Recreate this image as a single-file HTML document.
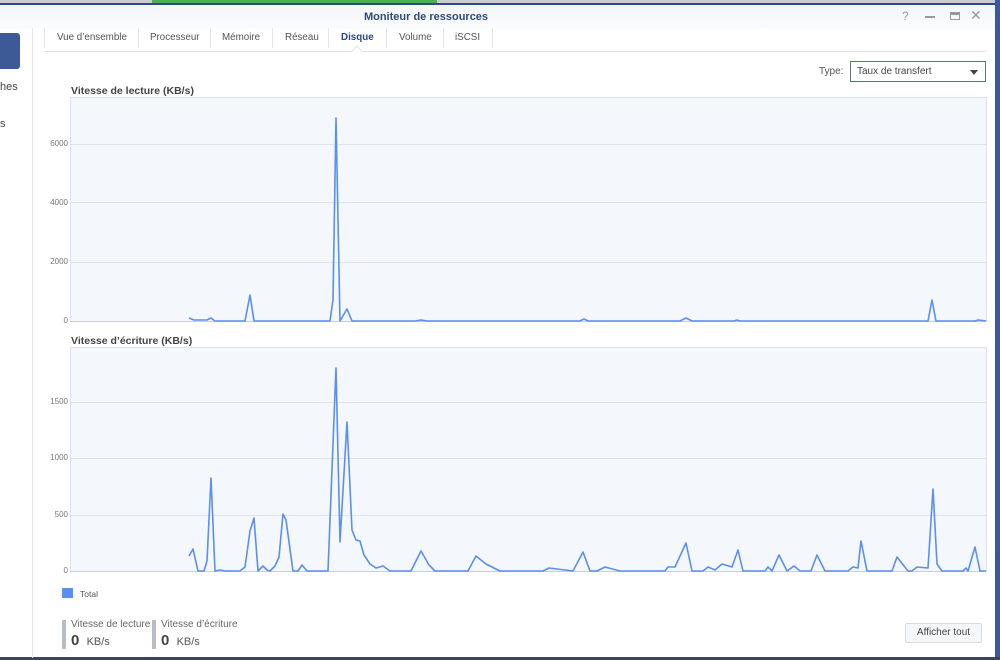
<!DOCTYPE html>
<html><head><meta charset="utf-8"><style>
*{margin:0;padding:0;box-sizing:border-box}
body{width:1000px;height:660px;overflow:hidden;position:relative;background:#fff;font-family:"Liberation Sans",sans-serif;font-size:11px;color:#555}
.a{position:absolute}
.tab{position:absolute;top:32px;font-size:9.8px;color:#555}
.sep{position:absolute;top:28px;width:1px;height:20px;background:#e3e6ea}
.yl{position:absolute;font-size:8px;color:#777;text-align:right;width:30px}
</style></head><body>
<div class="a" style="left:0;top:0;width:1000px;height:5px;background:#c9ccd1"></div>
<div class="a" style="left:0;top:3px;width:1000px;height:2px;background:#2e4a86"></div>
<div class="a" style="left:152px;top:0;width:285px;height:3px;background:#4caf50"></div>
<div class="a" style="left:995px;top:0;width:5px;height:660px;background:#3a57a0"></div>
<div class="a" style="left:0;top:657px;width:1000px;height:3px;background:#3a4658"></div>
<div class="a" style="left:0;top:5px;width:995px;height:24px;background:linear-gradient(#f3f5f8,#fbfcfd)"></div>
<div class="a" style="left:0;top:11px;width:852px;text-align:center;font-weight:bold;font-size:11px;color:#2d4a7a">Moniteur de ressources</div>
<div class="a" style="left:902px;top:9px;font-size:12px;color:#999">?</div>
<div class="a" style="left:925px;top:16px;width:10px;height:1.5px;background:#999"></div>
<div class="a" style="left:950px;top:12px;width:10px;height:8px;border:1.5px solid #999;border-top-width:3px"></div>
<div class="a" style="left:970px;top:7px;font-size:14px;color:#999">✕</div>
<div class="a" style="left:0;top:33px;width:20px;height:36px;background:#3d5a96;border-radius:0 3px 3px 0"></div>
<div class="a" style="left:0;top:81px;font-size:11px;color:#444">hes</div>
<div class="a" style="left:0;top:118px;font-size:11px;color:#444">s</div>
<div class="a" style="left:32px;top:28px;width:1px;height:630px;background:#e4e6ea"></div>
<div class="sep" style="left:44px"></div>
<div class="tab" style="left:57px">Vue d’ensemble</div><div class="sep" style="left:138px"></div>
<div class="tab" style="left:150px">Processeur</div><div class="sep" style="left:210px"></div>
<div class="tab" style="left:222px">Mémoire</div><div class="sep" style="left:272px"></div>
<div class="tab" style="left:285px">Réseau</div><div class="sep" style="left:328px"></div>
<div class="tab" style="left:341px;font-weight:bold;color:#2d4a7a">Disque</div><div class="sep" style="left:386px"></div>
<div class="tab" style="left:399px">Volume</div><div class="sep" style="left:443px"></div>
<div class="tab" style="left:455px">iSCSI</div><div class="sep" style="left:492px"></div>
<div class="a" style="left:44px;top:51px;width:942px;height:1px;background:#dfe2e6"></div>
<div class="a" style="left:353px;top:47px;width:8px;height:8px;background:#fff;border-left:1px solid #dfe2e6;border-top:1px solid #dfe2e6;transform:rotate(45deg)"></div>
<div class="a" style="left:819px;top:66px;font-size:10px;color:#555">Type:</div>
<div class="a" style="left:850px;top:61px;width:136px;height:21px;border:1px solid #5a6f96;"></div>
<div class="a" style="left:857px;top:66px;font-size:10px;color:#444">Taux de transfert</div>
<div class="a" style="left:970px;top:70px;width:0;height:0;border-left:4.5px solid transparent;border-right:4.5px solid transparent;border-top:5px solid #444"></div>
<div class="a" style="left:71px;top:85px;font-weight:bold;font-size:10.5px;color:#444">Vitesse de lecture (KB/s)</div>
<div class="a" style="left:71px;top:335px;font-weight:bold;font-size:10.5px;color:#444">Vitesse d’écriture (KB/s)</div>
<div class="yl" style="left:38px;top:139px">6000</div>
<div class="yl" style="left:38px;top:198px">4000</div>
<div class="yl" style="left:38px;top:257px">2000</div>
<div class="yl" style="left:38px;top:316px">0</div>
<div class="yl" style="left:38px;top:397px">1500</div>
<div class="yl" style="left:38px;top:453px">1000</div>
<div class="yl" style="left:38px;top:510px">500</div>
<div class="yl" style="left:38px;top:566px">0</div>
<svg class="a" style="left:0;top:0" width="1000" height="660">
<rect x="70.5" y="97.5" width="916" height="224" fill="#f4f7fc" stroke="#dde2ea"/>
<rect x="70.5" y="347.5" width="916" height="224" fill="#f4f7fc" stroke="#dde2ea"/>
<g stroke="#dfe3e9" stroke-width="1">
<line x1="71" x2="986" y1="144.5" y2="144.5"/><line x1="71" x2="986" y1="202.5" y2="202.5"/><line x1="71" x2="986" y1="262.5" y2="262.5"/>
<line x1="71" x2="986" y1="402.5" y2="402.5"/><line x1="71" x2="986" y1="458.5" y2="458.5"/><line x1="71" x2="986" y1="515.5" y2="515.5"/>
</g>
<line x1="70" x2="986" y1="321.5" y2="321.5" stroke="#c9ced8"/>
<line x1="70" x2="986" y1="571.5" y2="571.5" stroke="#c9ced8"/>
<g fill="none" stroke="#5b8ff0" stroke-width="1.6" stroke-linejoin="round">
<polyline points="189,318 194,320 207,320 211,318 215,321 245,321 250,295 254,321 330,321 333,300 336,118 340,321 347,309 352,321 415,321 421,320 427,321 580,321 584,319 588,321 680,321 686,318 692,321 734,321 737,320 740,321 928,321 932,300 936,321 975,321 978,320 986,321"/>
<polyline points="189,556 193,549 198,571 204,571 207,561 211,478 215,571 220,570 225,571 240,571 245,567 250,531 254,518 258,571 263,566 267,570 270,571 275,566 279,557 283,514 286,520 293,571 298,571 302,565 307,571 328,571 336,368 340,542 347,422 352,530 356,540 360,541 364,555 370,564 376,568 383,566 390,571 411,571 421,551 429,565 435,571 468,571 476,556 486,564 494,568 500,571 543,571 549,568 573,571 583,552 590,571 597,571 605,567 620,571 665,571 668,567 675,567 686,543 692,571 703,571 708,567 715,570 722,564 732,567 738,550 743,571 765,571 768,567 772,571 779,555 787,571 794,566 800,571 811,571 817,555 825,571 848,571 853,567 858,568 861,541 867,571 892,571 897,557 908,571 912,571 917,567 928,568 933,489 937,564 942,571 963,571 966,568 968,571 975,547 980,571 986,571"/>
</g>
</svg>
<div class="a" style="left:62px;top:588px;width:11px;height:10px;background:#5b8ff0"></div>
<div class="a" style="left:80px;top:589px;font-size:8.5px;color:#555">Total</div>
<div class="a" style="left:62px;top:620px;width:4px;height:29px;background:#b9bec6"></div>
<div class="a" style="left:71px;top:619px;font-size:10px;color:#666">Vitesse de lecture</div>
<div class="a" style="left:71px;top:632px;font-size:15px;font-weight:bold;color:#444">0 <span style="font-size:11px;font-weight:normal;color:#555">&nbsp;KB/s</span></div>
<div class="a" style="left:152px;top:620px;width:4px;height:29px;background:#b9bec6"></div>
<div class="a" style="left:161px;top:619px;font-size:10px;color:#666">Vitesse d’écriture</div>
<div class="a" style="left:161px;top:632px;font-size:15px;font-weight:bold;color:#444">0 <span style="font-size:11px;font-weight:normal;color:#555">&nbsp;KB/s</span></div>
<div class="a" style="left:905px;top:623px;width:77px;height:20px;border:1px solid #d7dbe1;border-radius:2px;background:#f5f7f9;text-align:center;line-height:18px;font-size:10px;color:#444">Afficher tout</div>
</body></html>
